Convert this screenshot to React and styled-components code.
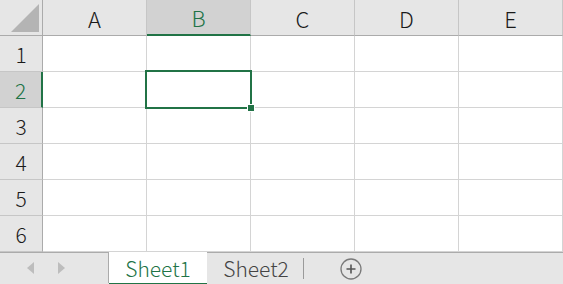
import React from 'react'
import styled, { createGlobalStyle, css } from 'styled-components'

const GlobalStyle = createGlobalStyle`
  html, body {
    margin: 0;
    padding: 0;
    background: #ffffff;
  }
  body {
    font-family: "Noto Sans CJK JP", "Noto Sans", sans-serif;
    font-weight: 300;
  }
`

const green = '#217346'

const Book = styled.div`
  width: 563px;
  height: 284px;
  overflow: hidden;
  display: flex;
  flex-direction: column;
`

const Grid = styled.div`
  position: relative;
  display: grid;
  grid-template-columns: 43px repeat(5, 104px);
  grid-template-rows: 36px repeat(6, 36px);
  background: #ffffff;
`

const Corner = styled.div`
  position: relative;
  background: #e6e6e6;
  border-right: 1px solid #ababab;
  border-bottom: 1px solid #ababab;
  svg {
    position: absolute;
    right: 3px;
    bottom: 3px;
  }
`

const ColHead = styled.div`
  display: flex;
  align-items: center;
  justify-content: center;
  background: #e6e6e6;
  border-right: 1px solid #c6c6c6;
  border-bottom: 1px solid #ababab;
  font-size: 22px;
  color: #1a1a1a;
  ${p => p.$active && css`
    background: #d2d2d2;
    color: ${green};
    border-bottom: 2px solid ${green};
  `}
`

const RowHead = styled.div`
  display: flex;
  align-items: center;
  justify-content: center;
  background: #e6e6e6;
  border-right: 1px solid #ababab;
  border-bottom: 1px solid #c6c6c6;
  font-size: 21px;
  color: #1a1a1a;
  ${p => p.$active && css`
    background: #d2d2d2;
    color: ${green};
    border-right: 2px solid ${green};
  `}
`

const Cell = styled.div`
  border-right: 1px solid #d4d4d4;
  border-bottom: 1px solid #d4d4d4;
`

const Selection = styled.div`
  position: absolute;
  left: 145px;
  top: 70px;
  width: 107px;
  height: 39px;
  box-sizing: border-box;
  border: 2px solid ${green};
  pointer-events: none;
`

const FillHandle = styled.div`
  position: absolute;
  right: -5px;
  bottom: -5px;
  width: 6px;
  height: 6px;
  background: ${green};
  border: 1px solid #ffffff;
`

const TabBar = styled.div`
  flex: 1;
  display: flex;
  align-items: stretch;
  background: #e6e6e6;
  border-top: 1px solid #ababab;
  border-bottom: 1px solid #c8c8c8;
`

const Nav = styled.div`
  width: 109px;
  display: flex;
  align-items: center;
  padding-left: 27px;
  gap: 24px;
  box-sizing: border-box;
  border-right: 1px solid #ababab;
  margin-bottom: 4px;
`

const Arrow = styled.span`
  width: 0;
  height: 0;
  border-top: 6px solid transparent;
  border-bottom: 6px solid transparent;
  ${p => p.$dir === 'left'
    ? css`border-right: 7px solid #bdbdbd;`
    : css`border-left: 7px solid #bdbdbd;`}
`

const Tab = styled.div`
  width: 98px;
  display: flex;
  align-items: center;
  justify-content: center;
  font-size: 21px;
  color: #444444;
  box-sizing: border-box;
  padding-bottom: 4px;
  ${p => p.$active && css`
    background: #ffffff;
    color: ${green};
    border-bottom: 3px solid ${green};
    margin-top: -1px;
    margin-bottom: 1px;
    padding-bottom: 0;
  `}
`

const Divider = styled.span`
  align-self: center;
  width: 1px;
  height: 21px;
  background: #9a9a9a;
  margin: -4px 0 0 -2px;
`

const AddButton = styled.div`
  display: flex;
  align-items: center;
  padding-left: 36px;
  padding-bottom: 2px;
`

const cols = ['A', 'B', 'C', 'D', 'E']
const rows = [1, 2, 3, 4, 5, 6]

const App = () => {
    return (
        <Book>
            <GlobalStyle />
            <Grid>
                <Corner>
                    <svg width="28" height="28" viewBox="0 0 28 28">
                        <polygon points="0,28 28,28 28,0" fill="#b4b4b4" />
                    </svg>
                </Corner>
                {cols.map(c => (
                    <ColHead key={c} $active={c === 'B'}>{c}</ColHead>
                ))}
                {rows.map(r => (
                    <React.Fragment key={r}>
                        <RowHead $active={r === 2}>{r}</RowHead>
                        {cols.map(c => <Cell key={c + r} />)}
                    </React.Fragment>
                ))}
                <Selection>
                    <FillHandle />
                </Selection>
            </Grid>
            <TabBar>
                <Nav>
                    <Arrow $dir="left" />
                    <Arrow $dir="right" />
                </Nav>
                <Tab $active>Sheet1</Tab>
                <Tab>Sheet2</Tab>
                <Divider />
                <AddButton>
                    <svg width="22" height="22" viewBox="0 0 22 22">
                        <circle cx="11" cy="11" r="10" fill="none" stroke="#7a7a7a" strokeWidth="1.3" />
                        <path d="M11 6.5v9M6.5 11h9" stroke="#555" strokeWidth="1.6" />
                    </svg>
                </AddButton>
            </TabBar>
        </Book>
    )
}

export default App
